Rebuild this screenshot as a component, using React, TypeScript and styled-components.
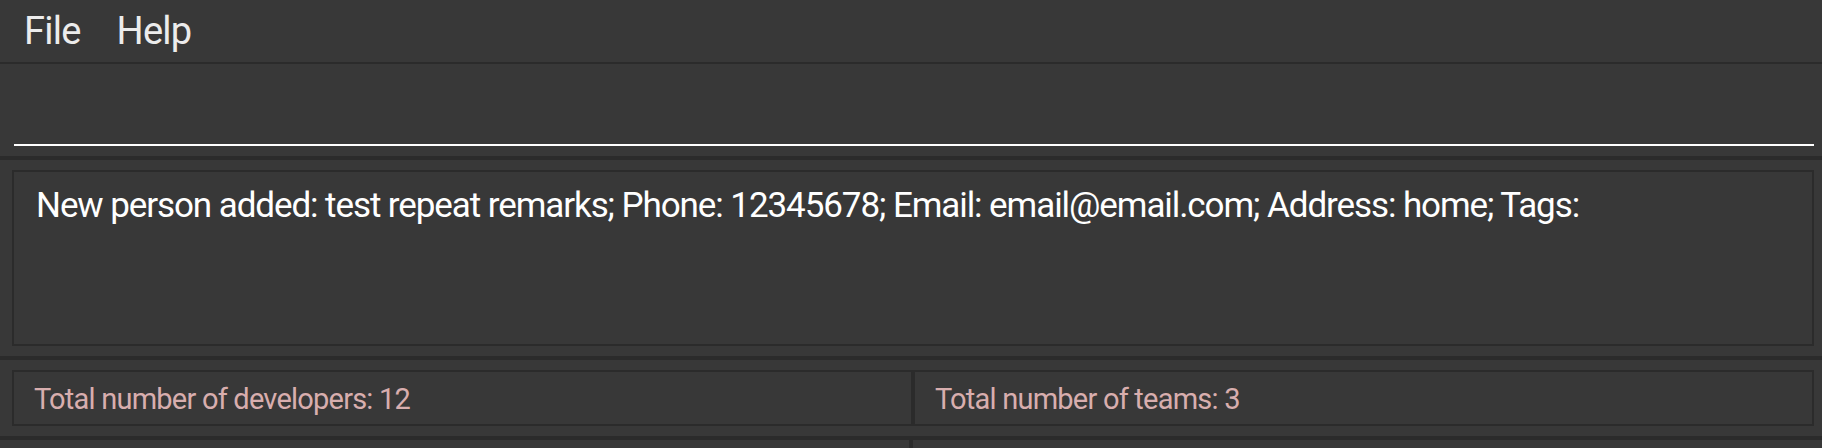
import React from "react";
import styled, { createGlobalStyle } from "styled-components";

const GlobalStyle = createGlobalStyle`
  html, body {
    margin: 0;
    padding: 0;
    background: #383838;
  }
  body {
    font-family: Roboto, Inter, "Noto Sans", sans-serif;
    overflow: hidden;
  }
  * { box-sizing: border-box; }
`;

const Window = styled.div`
  display: flex;
  flex-direction: column;
  width: 1822px;
  background: #383838;
`;

const MenuBar = styled.nav`
  display: flex;
  align-items: center;
  height: 64px;
  padding: 0 0 0 6px;
  border-bottom: 2px solid #2b2b2b;
`;

const MenuItem = styled.span`
  font-size: 38px;
  letter-spacing: -0.02em;
  color: #ececec;
  padding: 0 18px;
  cursor: default;
`;

const CommandSection = styled.div`
  display: flex;
  align-items: flex-end;
  height: 92px;
  padding: 0 8px 10px 14px;
`;

const CommandInput = styled.input`
  width: 100%;
  height: 60px;
  background: transparent;
  border: none;
  border-bottom: 2px solid #ffffff;
  outline: none;
  color: #ffffff;
  font-family: inherit;
  font-size: 34px;
  padding: 0 10px;
`;

const HDivider = styled.div`
  height: 4px;
  background: #2b2b2b;
`;

const Section = styled.div<{ $height: number }>`
  height: ${(p) => p.$height}px;
  padding: 10px 8px 10px 12px;
`;

const ResultBox = styled.div`
  height: 100%;
  border: 2px solid #2b2b2b;
  padding: 13px 22px 12px;
  font-size: 35px;
  letter-spacing: -0.031em;
  color: #ffffff;
  white-space: nowrap;
`;

const StatusGrid = styled.div`
  display: grid;
  grid-template-columns: 1fr 1fr;
  height: 100%;
`;

const StatusBox = styled.div`
  display: flex;
  align-items: center;
  border: 2px solid #2b2b2b;
  padding: 1px 20px 0;
  font-size: 29px;
  letter-spacing: -0.027em;
  color: #d8aeae;
  white-space: nowrap;
`;

const SplitPane = styled.div`
  display: flex;
  height: 300px;
`;

const Pane = styled.div`
  flex: 1;
`;

const VDivider = styled.div`
  width: 4px;
  background: #2b2b2b;
`;

export default function App() {
  return (
    <>
      <GlobalStyle />
      <Window>
        <MenuBar>
          <MenuItem>File</MenuItem>
          <MenuItem>Help</MenuItem>
        </MenuBar>
        <CommandSection>
          <CommandInput aria-label="command" />
        </CommandSection>
        <HDivider />
        <Section $height={196}>
          <ResultBox>
            New person added: test repeat remarks; Phone: 12345678; Email: email@email.com; Address: home; Tags:
          </ResultBox>
        </Section>
        <HDivider />
        <Section $height={76}>
          <StatusGrid>
            <StatusBox>Total number of developers: 12</StatusBox>
            <StatusBox>Total number of teams: 3</StatusBox>
          </StatusGrid>
        </Section>
        <HDivider />
        <SplitPane>
          <Pane />
          <VDivider />
          <Pane />
        </SplitPane>
      </Window>
    </>
  );
}
